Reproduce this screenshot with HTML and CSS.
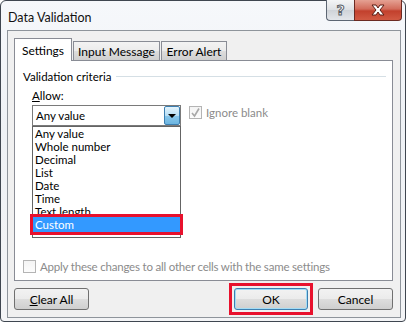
FILE: index.html
```html
<!DOCTYPE html>
<html lang="en">
<head>
    <meta charset="UTF-8">
    <meta name="viewport" content="width=device-width, initial-scale=1.0">
    <title>Data Validation</title>
    <link rel="stylesheet" href="styles.css">
</head>
<body>
    <div class="window">
        <div class="titlebar">
            <span class="title">Data Validation</span>
            <div class="caption">
                <span class="cap-btn help">?</span>
                <span class="cap-btn close">
                    <svg width="16" height="12" viewBox="0 0 16 12">
                        <path d="M2 1 L6 1 L8 4 L10 1 L14 1 L10 6 L14 11 L10 11 L8 8 L6 11 L2 11 L6 6 Z" fill="#fff" stroke="#5a1d14" stroke-width="1" stroke-linejoin="round"/>
                    </svg>
                </span>
            </div>
        </div>

        <div class="client">
            <div class="tabs">
                <div class="tab active" style="width: 58px;">Settings</div>
                <div class="tab" style="width: 87px;">Input Message</div>
                <div class="tab" style="width: 66px;">Error Alert</div>
            </div>

            <div class="panel">
                <div class="group">
                    <span>Validation criteria</span>
                    <span class="rule"></span>
                </div>

                <div class="criteria">
                    <div class="label"><u>A</u>llow:</div>
                    <div class="combo-row">
                        <div class="combo">
                            <span class="combo-text">Any value</span>
                            <span class="drop-btn"><span class="arrow"></span></span>
                            <ul class="list">
                                <li>Any value</li>
                                <li>Whole number</li>
                                <li>Decimal</li>
                                <li>List</li>
                                <li>Date</li>
                                <li>Time</li>
                                <li>Text length</li>
                                <li class="selected">Custom</li>
                            </ul>
                        </div>
                        <label class="check disabled">
                            <span class="box checked">
                                <svg width="11" height="11" viewBox="0 0 11 11">
                                    <path d="M2 6 L4.5 9 L9 1.5" fill="none" stroke="#a8a8a8" stroke-width="1.6"/>
                                </svg>
                            </span>
                            Ignore blank
                        </label>
                    </div>
                </div>

                <label class="check disabled apply">
                    <span class="box"></span>
                    Apply these changes to all other cells with the same settings
                </label>
            </div>

            <div class="buttons">
                <button class="btn"><u>C</u>lear All</button>
                <span class="ok-mark"><button class="btn default">OK</button></span>
                <button class="btn">Cancel</button>
            </div>
        </div>
    </div>
</body>
</html>
```

FILE: styles.css
```css
body {
    margin: 0;
    background-color: #fff;
    font-family: Lato, "Noto Sans", sans-serif;
    font-size: 11.5px;
    color: #000;
}

.window {
    width: 404px;
    height: 320px;
    border: 1px solid #3f4650;
    border-radius: 6px 6px 4px 4px;
    background: linear-gradient(#f6f8fb, #eef1f5 40%, #f3f4f6);
}

.titlebar {
    display: flex;
    align-items: flex-start;
    height: 29px;
}

.title {
    margin: 9px 0 0 7px;
    font-size: 12.5px;
    color: #111;
}

.caption {
    display: flex;
    margin-left: auto;
    margin-right: 3px;
    margin-top: -1px;
}

.cap-btn {
    display: flex;
    align-items: center;
    justify-content: center;
    height: 20px;
    border: 1px solid #5d6673;
    border-top: none;
}

.help {
    width: 27px;
    border-radius: 0 0 0 4px;
    border-right: none;
    background: linear-gradient(#f4f5f6, #dde0e4 50%, #cfd3d8 51%, #e3e6ea);
    font-family: "DejaVu Sans", sans-serif;
    font-weight: bold;
    font-size: 14px;
    color: #f7f7f7;
    -webkit-text-stroke: 1px #5a5f66;
}

.close {
    width: 46px;
    border-radius: 0 0 4px 0;
    border-color: #6b2a22;
    background: linear-gradient(#e5a193, #d26c5b 45%, #c2402d 55%, #d15a43);
}

.client {
    margin-left: 6px;
    width: 379px;
    padding: 7px 7px 7px 6px;
    border: 1px solid #8e949b;
    background-color: #f0f0f0;
}

.tabs {
    display: flex;
    align-items: flex-end;
    height: 22px;
    padding-left: 1px;
}

.tab {
    box-sizing: border-box;
    height: 19px;
    margin-right: 1px;
    border: 1px solid #898c95;
    border-bottom: none;
    background: linear-gradient(#f3f3f3, #ebebeb 50%, #dddddd 51%, #cfcfcf);
    text-align: center;
    font-size: 12px;
    line-height: 19px;
}

.tab.active {
    position: relative;
    z-index: 1;
    height: 23px;
    margin-bottom: -1px;
    margin-left: -1px;
    background: #fff;
    line-height: 24px;
}

.panel {
    position: relative;
    box-sizing: border-box;
    height: 221px;
    border: 1px solid #898c95;
    background-color: #fff;
    padding: 8px 6px 0 8px;
}

.group {
    display: flex;
    align-items: center;
    height: 15px;
}

.rule {
    flex: 1;
    height: 1px;
    margin-left: 5px;
    background-color: #d5dfe5;
}

.criteria {
    padding-left: 9px;
}

.label {
    height: 15px;
    margin-top: 5px;
}

.combo-row {
    display: flex;
    align-items: flex-start;
    margin-top: 1px;
    height: 21px;
}

.combo {
    position: relative;
    display: flex;
    align-items: center;
    box-sizing: border-box;
    width: 149px;
    height: 21px;
    border: 1px solid #7a7a7a;
    background: #fff;
}

.combo-text {
    padding-left: 3px;
}

.drop-btn {
    display: flex;
    align-items: center;
    justify-content: center;
    box-sizing: border-box;
    width: 16px;
    height: 19px;
    margin-left: auto;
    border: 1px solid #3c7fb1;
    border-radius: 2px;
    background: linear-gradient(#e3f3fc, #b7def4 50%, #8ac8ec 51%, #6cb5e0);
}

.arrow {
    width: 0;
    height: 0;
    border-left: 4px solid transparent;
    border-right: 4px solid transparent;
    border-top: 4px solid #000;
}

.list {
    position: absolute;
    top: 20px;
    left: -1px;
    box-sizing: border-box;
    width: 149px;
    height: 112px;
    margin: 0;
    padding: 0;
    list-style: none;
    border: 1px solid #646464;
    background: #fff;
    z-index: 2;
}

.list li {
    height: 13px;
    line-height: 13px;
    padding-left: 2px;
}

.list li.selected {
    position: relative;
    height: 15px;
    margin-top: -1px;
    line-height: 15px;
    background-color: #3399ff;
    color: #fff;
    outline: 3px solid #e8112d;
}

.check {
    display: flex;
    align-items: center;
    gap: 4px;
}

.check.disabled {
    color: #8b8b8b;
}

.combo-row .check {
    margin-left: 8px;
    margin-top: 1px;
}

.box {
    display: flex;
    align-items: center;
    justify-content: center;
    box-sizing: border-box;
    width: 13px;
    height: 13px;
    border: 1px solid #b4b4b4;
    background: linear-gradient(#f4f4f4, #fcfcfc);
}

.apply {
    margin-top: 134px;
    letter-spacing: -0.2px;
}

.buttons {
    display: flex;
    align-items: center;
    margin-top: 7px;
}

.btn {
    box-sizing: border-box;
    width: 75px;
    height: 22px;
    padding: 0;
    border: 1px solid #707070;
    border-radius: 3px;
    background: linear-gradient(#f2f2f2, #ebebeb 50%, #dddddd 51%, #cfcfcf);
    font-family: inherit;
    font-size: 12px;
    color: #000;
}

.ok-mark {
    display: flex;
    margin-left: auto;
    margin-right: 10px;
    outline: 3px solid #e8112d;
    outline-offset: 2px;
}

.btn.default {
    width: 74px;
    border-color: #3c7fb1;
    box-shadow: inset 0 0 0 1px #a3dcf5;
}
```
